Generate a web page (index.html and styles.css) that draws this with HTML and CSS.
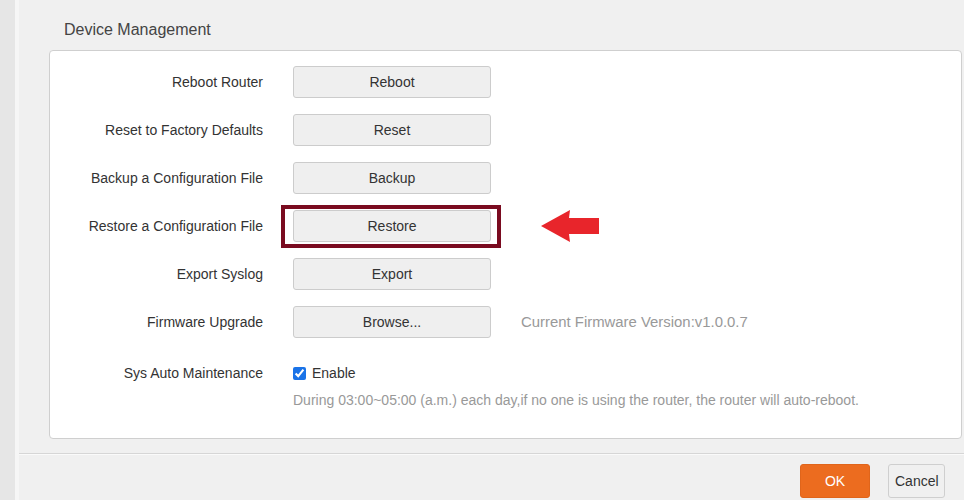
FILE: index.html
```html
<!DOCTYPE html>
<html lang="en">
<head>
    <meta charset="UTF-8">
    <title>Device Management</title>
    <link rel="stylesheet" href="styles.css">
</head>
<body>
    <div class="page">
        <div class="sidebar"></div>
        <div class="main">
            <div class="title">Device Management</div>
            <div class="panel">
                <div class="row">
                    <div class="label">Reboot Router</div>
                    <button class="btn">Reboot</button>
                </div>
                <div class="row">
                    <div class="label">Reset to Factory Defaults</div>
                    <button class="btn">Reset</button>
                </div>
                <div class="row">
                    <div class="label">Backup a Configuration File</div>
                    <button class="btn">Backup</button>
                </div>
                <div class="row">
                    <div class="label">Restore a Configuration File</div>
                    <div class="mark">
                        <button class="btn">Restore</button>
                        <span class="mark-box"></span>
                    </div>
                    <svg class="arrow" width="62" height="36" viewBox="0 0 62 36">
                        <path d="M1 18 L30 2 L29 10 L59 10 L59 26 L29 26 L30 34 Z" fill="#e8252b"/>
                    </svg>
                </div>
                <div class="row">
                    <div class="label">Export Syslog</div>
                    <button class="btn">Export</button>
                </div>
                <div class="row">
                    <div class="label">Firmware Upgrade</div>
                    <button class="btn">Browse...</button>
                    <span class="note">Current Firmware Version:v1.0.0.7</span>
                </div>
                <div class="row row-check">
                    <div class="label">Sys Auto Maintenance</div>
                    <label class="check"><input type="checkbox" checked> Enable</label>
                </div>
                <div class="hint">During 03:00~05:00 (a.m.) each day,if no one is using the router, the router will auto-reboot.</div>
            </div>
            <div class="footer">
                <button class="ok">OK</button>
                <button class="cancel">Cancel</button>
            </div>
        </div>
    </div>
</body>
</html>
```

FILE: styles.css
```css
body {
    margin: 0;
    font-family: "Liberation Sans", Arial, sans-serif;
    font-size: 14px;
    color: #333;
    background: #f0f0f0;
}

.page {
    display: flex;
    height: 500px;
    overflow: hidden;
}

.sidebar {
    width: 15px;
    background: #e6e6e6;
    border-right: 4px solid #f6f6f6;
    flex-shrink: 0;
}

.main {
    flex: 1;
    display: flex;
    flex-direction: column;
}

.title {
    height: 50px;
    line-height: 60px;
    padding-left: 45px;
    font-size: 16px;
    color: #444;
    box-sizing: border-box;
}

.panel {
    margin: 0 2px 0 30px;
    height: 389px;
    box-sizing: border-box;
    background: #fff;
    border: 1px solid #cfcfcf;
    border-radius: 4px;
    padding-top: 15px;
}

.row {
    display: flex;
    align-items: center;
    height: 32px;
    margin-bottom: 16px;
}

.label {
    width: 213px;
    text-align: right;
    margin-right: 30px;
    flex-shrink: 0;
}

.btn {
    width: 198px;
    height: 32px;
    background: #efefef;
    border: 1px solid #ccc;
    border-radius: 3px;
    font-family: inherit;
    font-size: 14px;
    color: #333;
}

.mark {
    position: relative;
    display: flex;
}

.mark-box {
    position: absolute;
    left: -12px;
    top: -5px;
    right: -10px;
    bottom: -6px;
    border: 4px solid #7a0b20;
}

.arrow {
    margin-left: 49px;
}

.note {
    margin-left: 30px;
    color: #999;
    font-size: 14.9px;
}

.row-check {
    margin-top: 20px;
    height: 30px;
    margin-bottom: 0;
}

.check {
    display: flex;
    align-items: center;
    gap: 6px;
}

.check input {
    margin: 0;
    width: 13px;
    height: 13px;
    accent-color: #1a73e8;
}

.hint {
    padding-left: 243px;
    color: #999;
    font-size: 14px;
    line-height: 20px;
    margin-top: 2px;
}

.footer {
    margin-top: 14px;
    border-top: 1px solid #d6d6d6;
    box-shadow: inset 0 1px 0 #fafafa;
    display: flex;
    justify-content: flex-end;
    gap: 18px;
    padding: 10px 19px 0 0;
}

.ok,
.cancel {
    height: 34px;
    border-radius: 3px;
    font-family: inherit;
    font-size: 14px;
}

.ok {
    width: 70px;
    background: #ec6c1f;
    border: 1px solid #e0651b;
    color: #fff;
}

.cancel {
    width: 57px;
    background: #f0f0f0;
    border: 1px solid #cfcfcf;
    color: #333;
}
```
